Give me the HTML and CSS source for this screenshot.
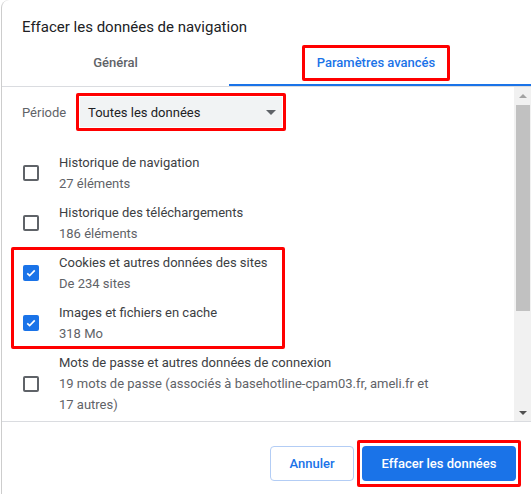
FILE: index.html
```html
<!DOCTYPE html>
<html lang="fr">
<head>
  <meta charset="UTF-8" />
  <title>Effacer les données de navigation</title>
  <link rel="stylesheet" href="styles.css">
</head>
<body>

  <div class="dialog">
    <div class="titre">Effacer les données de navigation</div>

    <div class="onglets">
      <div class="onglet">Général</div>
      <div class="onglet actif"><span class="marque">Paramètres avancés</span></div>
    </div>

    <div class="zone">
      <div class="contenu">
        <div class="periode">
          <span class="periode-label">Période</span>
          <span class="marque-select">
            <span class="select">Toutes les données<span class="fleche"></span></span>
          </span>
        </div>

        <div class="ligne">
          <span class="case"></span>
          <div class="textes">
            <div class="principal">Historique de navigation</div>
            <div class="secondaire">27 éléments</div>
          </div>
        </div>
        <div class="ligne">
          <span class="case"></span>
          <div class="textes">
            <div class="principal">Historique des téléchargements</div>
            <div class="secondaire">186 éléments</div>
          </div>
        </div>

        <div class="groupe">
          <div class="ligne">
            <span class="case cochee">
              <svg viewBox="0 0 16 16" width="12" height="12"><path d="M3 8.4l3.2 3.1L13 4.6" fill="none" stroke="#fff" stroke-width="2.2"/></svg>
            </span>
            <div class="textes">
              <div class="principal">Cookies et autres données des sites</div>
              <div class="secondaire">De 234 sites</div>
            </div>
          </div>
          <div class="ligne">
            <span class="case cochee">
              <svg viewBox="0 0 16 16" width="12" height="12"><path d="M3 8.4l3.2 3.1L13 4.6" fill="none" stroke="#fff" stroke-width="2.2"/></svg>
            </span>
            <div class="textes">
              <div class="principal">Images et fichiers en cache</div>
              <div class="secondaire">318 Mo</div>
            </div>
          </div>
        </div>

        <div class="ligne">
          <span class="case"></span>
          <div class="textes">
            <div class="principal">Mots de passe et autres données de connexion</div>
            <div class="secondaire">19 mots de passe (associés à basehotline-cpam03.fr, ameli.fr et 17 autres)</div>
          </div>
        </div>
      </div>

      <div class="defilement">
        <div class="bouton-defil haut"></div>
        <div class="piste"><div class="curseur"></div></div>
        <div class="bouton-defil bas"></div>
      </div>
    </div>

    <div class="pied">
      <button class="btn annuler">Annuler</button>
      <span class="marque-btn"><button class="btn effacer">Effacer les données</button></span>
    </div>
  </div>

</body>
</html>
```

FILE: styles.css
```css
body {
  margin: 0;
  background: #fff;
  font-family: Roboto, "Liberation Sans", Arial, sans-serif;
  color: #202124;
}
.dialog {
  margin-left: 1px;
  height: 494px;
  border-left: 1px solid #cdcdcd;
  border-top-left-radius: 8px;
  display: flex;
  flex-direction: column;
}
.titre {
  font-size: 15px;
  line-height: 20px;
  padding: 17px 0 7px 20px;
  color: #202124;
}
.onglets {
  display: grid;
  grid-template-columns: 227px 1fr;
  height: 42px;
  border-bottom: 1px solid #dadce0;
}
.onglet {
  display: flex;
  justify-content: center;
  align-items: flex-start;
  padding-top: 1px;
  font-size: 13px;
  font-weight: 500;
  color: #5f6368;
  line-height: 36px;
}
.onglet.actif {
  color: #1a73e8;
  box-shadow: inset 0 -2px 0 #1a73e8;
  padding-right: 8px;
}
.marque {
  border: 3px solid #f00;
  border-radius: 2px;
  line-height: 30px;
  padding: 0 12px;
}
.zone {
  display: flex;
  height: 334px;
}
.contenu {
  flex: 1;
  overflow: hidden;
}
.periode {
  display: flex;
  align-items: center;
  padding: 6px 0 0 20px;
  margin-bottom: 17px;
  font-size: 13px;
}
.periode-label {
  width: 54px;
  color: #5f6368;
}
.marque-select {
  border: 3px solid #f00;
  border-radius: 2px;
  padding: 1px;
}
.select {
  display: flex;
  justify-content: space-between;
  align-items: center;
  width: 194px;
  height: 30px;
  padding-left: 8px;
  background: #f1f3f4;
  color: #202124;
}
.fleche {
  width: 0;
  height: 0;
  border-left: 5px solid transparent;
  border-right: 5px solid transparent;
  border-top: 5px solid #5f6368;
  margin-right: 6px;
}
.ligne {
  display: flex;
  align-items: center;
  padding: 4px 0 4px 21px;
  font-size: 13px;
  line-height: 21px;
}
.case {
  width: 16px;
  height: 16px;
  box-sizing: border-box;
  border: 2px solid #5f6368;
  border-radius: 2px;
  flex-shrink: 0;
  margin-right: 20px;
  display: flex;
  align-items: center;
  justify-content: center;
}
.case.cochee {
  border: none;
  background: #1a73e8;
}
.textes {
  max-width: 382px;
}
.principal {
  color: #3c4043;
}
.secondaire {
  color: #5f6368;
}
.groupe {
  position: relative;
}
.groupe::after {
  content: "";
  position: absolute;
  left: 9px;
  top: -1px;
  width: 274px;
  height: 102px;
  box-sizing: border-box;
  border: 3px solid #f00;
  border-radius: 2px;
}
.defilement {
  width: 17px;
  background: #f1f1f1;
  display: flex;
  flex-direction: column;
}
.bouton-defil {
  height: 17px;
  display: flex;
  align-items: center;
  justify-content: center;
}
.bouton-defil.haut::before {
  content: "";
  border-left: 4px solid transparent;
  border-right: 4px solid transparent;
  border-bottom: 4px solid #a3a3a3;
}
.bouton-defil.bas::before {
  content: "";
  border-left: 4px solid transparent;
  border-right: 4px solid transparent;
  border-top: 4px solid #505050;
}
.piste {
  flex: 1;
}
.curseur {
  margin: 1px 1px 0 2px;
  height: 206px;
  background: #c1c1c1;
}
.pied {
  border-top: 1px solid #dadce0;
  display: flex;
  justify-content: flex-end;
  align-items: flex-start;
  gap: 3px;
  padding: 18px 10px 0 0;
}
.btn {
  font-family: inherit;
  font-size: 13px;
  font-weight: 500;
  height: 35px;
  border-radius: 4px;
  cursor: pointer;
}
.annuler {
  margin-top: 6px;
  width: 84px;
  background: #fff;
  color: #1a73e8;
  border: 1px solid #b3cdf5;
}
.marque-btn {
  border: 3px solid #f00;
  border-radius: 2px;
  padding: 3px 2px;
  display: flex;
}
.effacer {
  width: 154px;
  background: #1a73e8;
  color: #fff;
  border: none;
}
```
